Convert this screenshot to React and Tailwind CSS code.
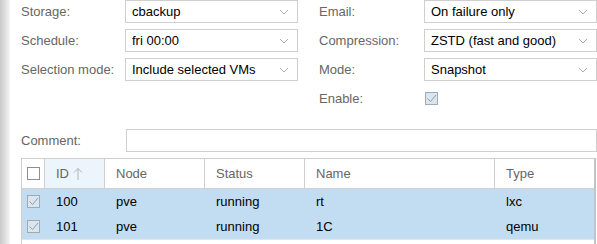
import React from "react";

const Chevron = () => (
  <svg width="10" height="6" viewBox="0 0 10 6" className="shrink-0">
    <path d="M1 1 L5 5 L9 1" fill="none" stroke="#b0b0b0" strokeWidth="1" />
  </svg>
);

const Combo = ({ value, className = "" }) => (
  <div className={`h-[23px] border border-[#cfcfcf] bg-white flex items-center pl-[6px] pr-[8px] text-[13px] text-[#000] ${className}`}>
    <span className="flex-1 truncate">{value}</span>
    <Chevron />
  </div>
);

const Check = ({ checked }) => (
  <div className={`w-[13px] h-[13px] border ${checked ? "border-[#a8a8a8] bg-[#d6e6f3]" : "border-[#8e8e8e] bg-white"} flex items-center justify-center`}>
    {checked && (
      <svg width="11" height="11" viewBox="0 0 11 11">
        <path d="M1.5 5.5 L4.5 8.5 L10 2" fill="none" stroke="#9a9a9a" strokeWidth="1" />
      </svg>
    )}
  </div>
);

const UpArrow = () => (
  <svg width="10" height="14" viewBox="0 0 10 14" className="shrink-0">
    <path d="M5 13 L5 1.5 M1 5.5 L5 1.5 L9 5.5" fill="none" stroke="#b4b4b4" strokeWidth="1" />
  </svg>
);

const Row = ({ label, children, lw = "w-[104px]" }) => (
  <div className="flex items-center h-[23px]">
    <div className={`${lw} shrink-0 text-[13px] text-[#666]`}>{label}</div>
    {children}
  </div>
);

export default function App() {
  const rows = [
    { id: "100", node: "pve", status: "running", name: "rt", type: "lxc", sel: true },
    { id: "101", node: "pve", status: "running", name: "1C", type: "qemu", sel: true },
    { id: "105", node: "pve", status: "running", name: "web", type: "lxc", sel: false },
  ];
  return (
    <div className="w-[597px] h-[244px] overflow-hidden bg-white flex" style={{ fontFamily: '"Liberation Sans", Arial, sans-serif' }}>
      <div className="w-[10px] shrink-0 bg-gradient-to-r from-[#c9c9c9] via-[#dedede] to-[#f7f7f7]" />
      <div className="flex-1 pl-[11px] pt-0 flex flex-col">
        <div className="flex">
          <div className="w-[277px] shrink-0 flex flex-col gap-[6px]">
            <Row label="Storage:"><Combo value="cbackup" className="w-[173px]" /></Row>
            <Row label="Schedule:"><Combo value="fri 00:00" className="w-[173px]" /></Row>
            <Row label="Selection mode:"><Combo value="Include selected VMs" className="w-[173px]" /></Row>
          </div>
          <div className="w-[21px] shrink-0" />
          <div className="flex-1 flex flex-col gap-[6px]">
            <Row label="Email:" lw="w-[105px]"><Combo value="On failure only" className="flex-1" /></Row>
            <Row label="Compression:" lw="w-[105px]"><Combo value="ZSTD (fast and good)" className="flex-1" /></Row>
            <Row label="Mode:" lw="w-[105px]"><Combo value="Snapshot" className="flex-1" /></Row>
            <Row label="Enable:" lw="w-[106px]"><Check checked /></Row>
          </div>
        </div>
        <div className="flex items-center h-[23px] mt-[19px]">
          <div className="w-[105px] shrink-0 text-[13px] text-[#666]">Comment:</div>
          <div className="flex-1 h-[23px] border border-[#cfcfcf]" />
        </div>
        <div className="mt-[6px] mr-[1px] border border-[#cfcfcf] border-r-[#c4c4c4] border-r-2">
          <div className="flex h-[30px] border-b border-[#cfcfcf] text-[13px] text-[#666]">
            <div className="w-[23px] shrink-0 border-r border-[#d0d0d0] flex items-center justify-center"><Check /></div>
            <div className="w-[60px] shrink-0 border-r border-[#d0d0d0] bg-[#ecf4fc] flex items-center pl-[11px] gap-[4px]">
              ID <UpArrow />
            </div>
            <div className="w-[100px] shrink-0 border-r border-[#d0d0d0] flex items-center pl-[11px]">Node</div>
            <div className="w-[100px] shrink-0 border-r border-[#d0d0d0] flex items-center pl-[11px]">Status</div>
            <div className="w-[190px] shrink-0 border-r border-[#d0d0d0] flex items-center pl-[11px]">Name</div>
            <div className="flex-1 flex items-center pl-[11px]">Type</div>
          </div>
          {rows.map((r) => (
            <div key={r.id} className={`flex h-[25px] text-[13px] text-[#000] ${r.sel ? "bg-[#c2ddf2]" : "bg-white border-t border-[#e5e5e5]"}`}>
              <div className="w-[23px] shrink-0 flex items-center justify-center"><Check checked={r.sel} /></div>
              <div className="w-[60px] shrink-0 flex items-center pl-[11px]">{r.id}</div>
              <div className="w-[100px] shrink-0 flex items-center pl-[11px]">{r.node}</div>
              <div className="w-[100px] shrink-0 flex items-center pl-[11px]">{r.status}</div>
              <div className="w-[190px] shrink-0 flex items-center pl-[11px]">{r.name}</div>
              <div className="flex-1 flex items-center pl-[11px]">{r.type}</div>
            </div>
          ))}
        </div>
      </div>
    </div>
  );
}
